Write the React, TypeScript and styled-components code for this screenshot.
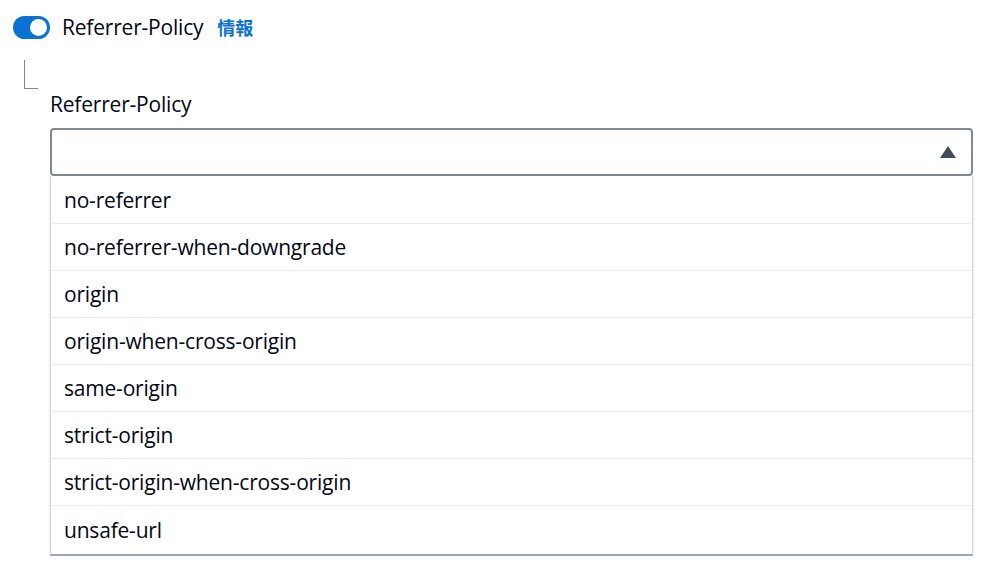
import React from "react";
import styled, { createGlobalStyle } from "styled-components";

const Global = createGlobalStyle`
  html, body {
    margin: 0;
    padding: 0;
    background: #ffffff;
  }
  body {
    font-family: "Open Sans", "Noto Sans CJK JP", sans-serif;
    color: #000716;
  }
`;

const Page = styled.div`
  padding: 14px 27px 0 13px;
  width: 1000px;
  box-sizing: border-box;
`;

const ToggleRow = styled.div`
  display: flex;
  align-items: center;
  height: 26px;
`;

const Toggle = styled.span`
  position: relative;
  width: 37px;
  height: 23px;
  border-radius: 12px;
  background: #0972d3;
  flex-shrink: 0;

  &::after {
    content: "";
    position: absolute;
    top: 3px;
    right: 3px;
    width: 17px;
    height: 17px;
    border-radius: 50%;
    background: #ffffff;
  }
`;

const ToggleLabel = styled.span`
  margin-left: 12px;
  font-size: 21px;
  letter-spacing: -0.2px;
`;

const Info = styled.span`
  margin-left: 14px;
  font-size: 18px;
  font-weight: 700;
  color: #0972d3;
`;

const Nested = styled.div`
  display: flex;
  margin-top: 20px;
`;

const Branch = styled.div`
  width: 13px;
  height: 28px;
  margin-left: 11px;
  border-left: 1px solid #7d8998;
  border-bottom: 1px solid #7d8998;
  flex-shrink: 0;
`;

const Field = styled.div`
  flex: 1;
  margin-left: 12px;
  padding-top: 30px;
`;

const FieldLabel = styled.div`
  font-size: 21px;
  letter-spacing: -0.2px;
  line-height: 28px;
`;

const Select = styled.div`
  margin-top: 10px;
  height: 44px;
  border: 2px solid #7d8998;
  border-radius: 4px;
  display: flex;
  align-items: center;
  justify-content: flex-end;
  padding-right: 15px;
`;

const Caret = styled.span`
  width: 0;
  height: 0;
  border-left: 8px solid transparent;
  border-right: 8px solid transparent;
  border-bottom: 12px solid #414d5c;
`;

const Menu = styled.ul`
  list-style: none;
  margin: 0;
  padding: 0;
  border: 1px solid #d1d5db;
  border-top: none;
  border-bottom: 2px solid #9ba7b6;
  box-shadow: 0 1px 2px rgba(0, 7, 22, 0.15);
`;

const Option = styled.li`
  height: 46px;
  display: flex;
  align-items: center;
  padding-left: 13px;
  font-size: 21px;
  letter-spacing: -0.2px;
  border-top: 1px solid #e9ebed;

  &:first-child {
    border-top: none;
    height: 47px;
  }

  &:last-child {
    height: 47px;
    padding-bottom: 1px;
  }
`;

const options = [
  "no-referrer",
  "no-referrer-when-downgrade",
  "origin",
  "origin-when-cross-origin",
  "same-origin",
  "strict-origin",
  "strict-origin-when-cross-origin",
  "unsafe-url",
];

export default function App() {
  return (
    <>
      <Global />
      <Page>
        <ToggleRow>
          <Toggle />
          <ToggleLabel>Referrer-Policy</ToggleLabel>
          <Info>情報</Info>
        </ToggleRow>
        <Nested>
          <Branch />
          <Field>
            <FieldLabel>Referrer-Policy</FieldLabel>
            <Select>
              <Caret />
            </Select>
            <Menu>
              {options.map((o) => (
                <Option key={o}>{o}</Option>
              ))}
            </Menu>
          </Field>
        </Nested>
      </Page>
    </>
  );
}
